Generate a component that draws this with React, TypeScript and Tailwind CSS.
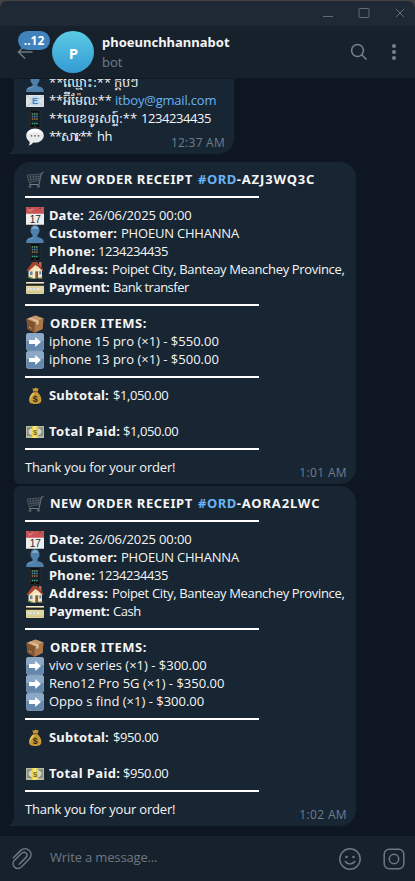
import React from "react";

type IconName =
  | "cart" | "calendar" | "user" | "phone" | "house" | "card" | "box"
  | "arrow" | "bag" | "cash" | "email" | "speech";

function Emoji({ name }: { name: IconName }) {
  return (
    <svg viewBox="0 0 18 18" className="ml-px h-[18px] w-[18px] shrink-0">
      {name === "cart" && (
        <g fill="none" stroke="#565d62" strokeWidth="1">
          <path d="M17.5 1.5 15.5 2 13 13.5H3.5" stroke="#777d82" />
          <path d="M1 4 15 3 13.5 9.5 3 11.5zM1.5 6.3 14.6 5.4M2.4 8.8 14 7.5M4 4 5.3 11M7 3.8 7.8 10.5M10 3.5V10M12.8 3.4 12 9.6" strokeWidth=".8" />
          <path d="M3.5 13.5 4.3 11.4" />
          <circle cx="4" cy="15.5" r="1.1" fill="#555b60" />
          <circle cx="12.5" cy="15.3" r="1.2" fill="#555b60" />
        </g>
      )}
      {name === "calendar" && (
        <g>
          <rect width="18" height="18" rx="1" fill="#eeeeec" />
          <path d="M0 1a1 1 0 0 1 1-1h16a1 1 0 0 1 1 1v5.8H0z" fill="#c65455" />
          <path d="M2.5 2.2h5M2.5 3.8h3" stroke="#e5a0a0" strokeWidth=".7" />
          <circle cx="4" cy="1.2" r=".8" fill="#6e2c30" />
          <circle cx="14" cy="1.2" r=".8" fill="#6e2c30" />
          <path d="M0 17.5h18" stroke="#b9b9b7" />
          <text x="9.2" y="16" textAnchor="middle" fontSize="10" fill="#24282b" className="font-['Liberation_Sans',sans-serif] tracking-normal">17</text>
        </g>
      )}
      {name === "user" && (
        <g>
          <path d="M.2 18c0-4.4 2.3-4.8 6.3-6V9.8C5 8.600 4.500 7.200 4.500 5.200 4.500 2 6.300.2 9 .2s4.500 1.800 4.500 5c0 2-.5 3.400-2 4.600V12c4 1.200 6.300 1.600 6.300 6z" fill="#4f7fab" />
          <path d="M6 4.500C6.300 2.300 7.300 1.300 9 1.300s2.700 1 3 3.200C11 3.500 7 3.500 6 4.500z" fill="#86abcb" />
          <path d="M2 15c1-1.500 4-1.600 5.500-2.600" stroke="#7ba2c5" fill="none" />
        </g>
      )}
      {name === "phone" && (
        <g>
          <rect x="4.300" y=".3" width="9.600" height="17.400" rx="1.200" fill="#0a0b0d" stroke="#3a3836" strokeWidth=".7" />
          <rect x="5.300" y="2.300" width="7.600" height="12.500" fill="#15222a" />
          <path d="M5.800 4h1.400m.8 0h1.400m.8 0h1.400" stroke="#6ea073" strokeWidth="1.300" />
          <path d="M5.800 6.500h1.400m.8 0h1.400m.8 0h1.400" stroke="#4d8fac" strokeWidth="1.300" />
          <path d="M5.800 9h1.400m.8 0h1.400m.8 0h1.400" stroke="#b07552" strokeWidth="1.300" />
          <path d="M5.800 13.500h1.400m.8 0h1.400m.8 0h1.400" stroke="#44a884" strokeWidth="1.300" />
          <circle cx="9.100" cy="16.200" r=".7" fill="#55504a" />
        </g>
      )}
      {name === "house" && (
        <g>
          <path d="M2.500 8.500 8 3l8 5v8.500l-9 1-4.500-1.500z" fill="#f3e1b5" />
          <path d="M7 17.500V8.500l9-1v9z" fill="#f8ebc9" />
          <path d="M13 1h2.500v5H13z" fill="#bd674d" />
          <path d="M.5 9.500 6.500 1.200 11 .8l6.700 8.400-1.400.8L10 3.400 2.300 10.600z" fill="#a84432" />
          <path d="M9.300 10.300h2.800v7H9.300z" fill="#8d573c" />
          <path d="M4 10.500h2.500v3.600H4zM13.300 10.200h2v3.400h-2z" fill="#5e8ea9" />
          <path d="M2 15.800 7 17.700M12.500 17.500l4-.5" stroke="#688b43" strokeWidth="1.400" />
        </g>
      )}
      {name === "card" && (
        <g>
          <rect y="3" width="18" height="12" rx="1" fill="#dfd5a0" />
          <path d="M0 4a1 1 0 0 1 1-1h16a1 1 0 0 1 1 1v.5H0z" fill="#f1ebcb" />
          <path d="M0 4.600h18v2.200H0z" fill="#20211d" />
          <path d="M2 9h11v2H2z" fill="#f5f2e5" />
          <path d="M3 10h1.500m1 0H8m1 0h2.500" stroke="#7f9cb3" strokeWidth=".8" />
          <path d="M1 13.200h16" stroke="#c5b978" strokeWidth=".8" />
        </g>
      )}
      {name === "box" && (
        <g>
          <path d="M.5 4 9.500.5l8 3-1 10.500L8.500 17.700 1.500 14z" fill="#94663e" />
          <path d="M.5 4 9.500.5l8 3L9 7.500z" fill="#c6996b" />
          <path d="M.5 4 9 7.500l-.5 10.200-7-3.700z" fill="#805430" />
          <path d="M9 7.500 17.500 3.500l-1 10.500-8 3.700z" fill="#a97649" />
          <path d="M4 2.700 12.700 5.800 12.600 9l-2.300 1 .1-3.100L2.600 3.300z" fill="#e1c39b" />
          <path d="M3 12 5.500 13.300" stroke="#d3ac7d" strokeWidth=".8" />
        </g>
      )}
      {name === "arrow" && (
        <g>
          <rect x=".2" y=".2" width="17.600" height="17.600" rx="2" fill="#6487ae" />
          <path d="M.2 8V2.200a2 2 0 0 1 2-2h13.600a2 2 0 0 1 2 2V8z" fill="#8ba8c7" />
          <rect x=".6" y=".6" width="16.800" height="16.800" rx="1.700" fill="none" stroke="#9eb5cc" strokeWidth=".5" />
          <path d="M3 6.900h6.200V4L15 9l-5.800 5v-2.900H3z" fill="#fff" />
        </g>
      )}
      {name === "bag" && (
        <g>
          <path d="M6.300 1.200 8 1.700 9.500.6l1.800 1 1.500-.3-1.500 3.800c2.600 2 4.100 5 4.100 8 0 3-2.400 4-6.200 4s-6.200-1-6.200-4c0-3 1.500-6 4.500-8z" fill="#c69a39" />
          <path d="M6 7c1-1 2-1.400 3-1.500C7 8 5 10 4.300 13c-.5-2.300.3-4.500 1.700-6z" fill="#ead06f" />
          <path d="M6.800 4.700h5" stroke="#825921" strokeWidth="1.200" />
          <text x="9.300" y="14.600" textAnchor="middle" fontSize="9" fontWeight="700" fill="#33291a" className="font-['Liberation_Sans',sans-serif] tracking-normal">$</text>
        </g>
      )}
      {name === "cash" && (
        <g>
          <rect y="3" width="18" height="12" fill="#b9b9a0" />
          <rect x="1" y="4.200" width="16" height="8.800" fill="#8b917c" />
          <ellipse cx="9" cy="8.700" rx="6.600" ry="4" fill="#d7d6c0" />
          <path d="M6 3h6v12H6z" fill="#ebd44f" />
          <path d="M7.500 3H10v12H7.500z" fill="#f5e98b" />
          <text x="9" y="11.500" textAnchor="middle" fontSize="7.500" fontWeight="700" fill="#78682a" className="font-['Liberation_Sans',sans-serif] tracking-normal">$</text>
        </g>
      )}
      {name === "email" && (
        <g>
          <rect y="3" width="18" height="12" fill="#dfe3e5" />
          <path d="M.5 14.500 7 9M17.500 14.500 11 9M.5 3.500 9 10l8.500-6.500" fill="none" stroke="#a9b1b7" strokeWidth=".7" />
          <rect x="5" y="4" width="8" height="9.500" rx="2" fill="#c2d8e9" />
          <text x="9" y="12" textAnchor="middle" fontSize="9" fontWeight="700" fill="#3685c9" className="font-['Liberation_Sans',sans-serif] tracking-normal">E</text>
        </g>
      )}
      {name === "speech" && (
        <g>
          <path d="M9 .5c5 0 8.800 3 8.800 7s-3.800 7.200-8.800 7.200c-.6 0-1.200 0-1.800-.1-1 1.500-2.500 2.600-4.700 3 .9-1.200 1.200-2.400 1.100-3.900C1.500 12.400.2 10.200.2 7.500c0-4 3.800-7 8.800-7z" fill="#e9eaeb" />
          <path d="M9 1.300c4 0 7 1.800 7.800 4.500-3-2-12-2-15.600 0C2 3.100 5 1.300 9 1.300z" fill="#fff" />
          <circle cx="5.500" cy="7.800" r=".9" fill="#666" />
          <circle cx="9" cy="7.800" r=".9" fill="#666" />
          <circle cx="12.500" cy="7.800" r=".9" fill="#666" />
        </g>
      )}
    </svg>
  );
}

const BOLD = "font-['Noto_Sans',sans-serif] font-bold";

function Row({ icon, children, className = "" }: { icon?: IconName; children?: React.ReactNode; className?: string }) {
  return (
    <div className="flex h-[18px] items-center whitespace-pre">
      {icon && <Emoji name={icon} />}
      <span className={`flex h-[18px] items-baseline pb-[2px] leading-[16px] ${icon ? "ml-[5px]" : ""} ${className}`}>{children}</span>
    </div>
  );
}

function Rule() {
  return (
    <div className="flex h-[18px] items-start pt-[7px]">
      <div className="h-[2px] w-[234px] bg-white" />
    </div>
  );
}

function Field({ icon, label, value, labelClass, valueClass }: {
  icon: IconName; label: string; value: string; labelClass: string; valueClass: string;
}) {
  return (
    <Row icon={icon}>
      <b className={`${BOLD} ${labelClass}`}>{label}</b>
      <span className={valueClass}>{value}</span>
    </Row>
  );
}

type Order = { id: string; payment: string; items: string[]; total: string; time: string; tail?: boolean };

function Receipt({ id, payment, items, total, time, tail }: Order) {
  return (
    <article
      className={`relative ml-[14px] w-[342px] bg-[#182533] pt-[9px] pb-[7px] pl-[11px] ${
        tail ? "rounded-t-[6px] rounded-tr-[16px] rounded-br-[16px]" : "rounded-[16px] rounded-bl-[6px]"
      }`}
    >
      <Row icon="cart" className={`pl-px ${BOLD}`}>
        <span className="w-[148px] tracking-[0.55px]">NEW ORDER RECEIPT</span>
        <span className="tracking-[0.5px] text-[#6ab3f3]">#ORD</span>
        <span className="tracking-[0.85px]">-{id}</span>
      </Row>
      <Rule />
      <Field icon="calendar" label="Date:" value="26/06/2025 00:00" labelClass="w-[39px] tracking-[0.1px]" valueClass="tracking-[-0.12px]" />
      <Field icon="user" label="Customer:" value="PHOEUN CHHANNA" labelClass="w-[72px] tracking-[0.1px]" valueClass="tracking-[-0.2px]" />
      <Field icon="phone" label="Phone:" value="1234234435" labelClass="w-[49px] tracking-[0.3px]" valueClass="tracking-[-0.43px]" />
      <Field icon="house" label="Address:" value="Poipet City, Banteay Meanchey Province," labelClass="w-[63px] tracking-[0.5px]" valueClass="tracking-[-0.33px]" />
      <Field icon="card" label="Payment:" value={payment} labelClass="w-[64px] tracking-[-0.1px]" valueClass="tracking-[-0.48px]" />
      <Rule />
      <Row icon="box" className={`pl-px tracking-[0.55px] ${BOLD}`}>ORDER ITEMS:</Row>
      {items.map((item) => (
        <Row key={item} icon="arrow">{item}</Row>
      ))}
      <Rule />
      <Field icon="bag" label="Subtotal:" value={total} labelClass="w-[64px] tracking-[0.15px]" valueClass="tracking-[-0.4px]" />
      <Row />
      <Field icon="cash" label="Total Paid:" value={total} labelClass="w-[74px] tracking-[0.4px]" valueClass="tracking-[-0.4px]" />
      <Rule />
      <Row className="tracking-[-0.2px]">Thank you for your order!</Row>
      <time className="absolute right-[9px] bottom-[3px] text-[12px] leading-[16px] tracking-[0.35px] text-[#6d7f8f]">{time}</time>
      {tail && <Tail />}
    </article>
  );
}

function Tail() {
  return (
    <svg viewBox="0 0 6 12" className="absolute bottom-0 -left-[6px] h-3 w-1.5">
      <path d="M6 0v12H0C4 10 6 6 6 0z" fill="#182533" />
    </svg>
  );
}

export default function App() {
  return (
    <div className="flex h-[881px] w-[415px] flex-col overflow-hidden bg-[#0e1621] font-['Open_Sans','Noto_Sans',sans-serif] text-[13px] leading-[18px] text-[#f5f5f5]">
      <div className="h-[26px] shrink-0 bg-[#444342] pt-px">
        <div className="flex h-full justify-end rounded-t-[7px] bg-[#1f2936]">
          <svg viewBox="0 0 95 25" className="h-[25px] w-[95px]" fill="none" stroke="#606d79" strokeWidth="1">
            <path d="M3 15.500h10" />
            <rect x="39" y="7.500" width="10" height="9" rx="1" />
            <path d="m76 8 8 8m0-8-8 8" />
          </svg>
        </div>
      </div>
      <header className="relative flex h-[53px] shrink-0 items-start border-b border-[#101923] bg-[#17212b]">
        <svg viewBox="0 0 16 14" className="mt-[19px] ml-[17px] h-[14px] w-4" fill="none" stroke="#6c7883" strokeWidth="1.500">
          <path d="M15.500 7H1.500M8 .5 1.500 7 8 13.500" />
        </svg>
        <div className="ml-[19px] mt-[5px] flex h-[42px] w-[42px] items-center justify-center rounded-full bg-linear-to-b from-[#5bcbe3] to-[#359ad4] pt-[2px] pl-px text-[15px] font-bold text-white">
          P
        </div>
        <div className="ml-[8px] mt-[7px]">
          <div className={`text-[13px] leading-[18px] text-[#f5f5f5] ${BOLD}`}>phoeunchhannabot</div>
          <div className="mt-[2px] text-[13px] leading-[18px] text-[#6d7f8f]">bot</div>
        </div>
        <div className="absolute top-[5px] left-[18px] flex h-[19px] w-8 items-center justify-center rounded-full bg-[#4082bc] text-[12px] font-bold text-white">
          ..12
        </div>
        <svg viewBox="0 0 18 18" className="mt-[17px] ml-auto h-[18px] w-[18px]" fill="none" stroke="#76818b" strokeWidth="1.500">
          <circle cx="7.500" cy="7.500" r="5.900" />
          <path d="m11.500 11.500 5 5" />
        </svg>
        <svg viewBox="0 0 6 18" className="mt-[17px] mr-[18px] ml-[23px] h-[18px] w-[6px]" fill="#76818b">
          <circle cx="3" cy="3" r="2" />
          <circle cx="3" cy="9" r="2" />
          <circle cx="3" cy="15" r="2" />
        </svg>
      </header>
      <main className="flex h-[757px] shrink-0 flex-col overflow-hidden">
        <div className="flex h-[75px] shrink-0 flex-col justify-end overflow-hidden pl-2">
          <article className="relative ml-[6px] w-[220px] rounded-br-[16px] bg-[#182533] pb-[8px] pl-[11px]">
            <Row icon="user">**ឈ្មោះ:** ក្តប់ៗ</Row>
            <Row icon="email"><span className="w-[66px] tracking-[-0.15px]">**អ៊ីម៉ែល:**</span><span className="tracking-[-0.2px] text-[#6ab3f3]">itboy@gmail.com</span></Row>
            <Row icon="phone"><span className="w-[92px]">**លេខទូរសព្ទ៍:**</span><span className="tracking-[-0.43px]">1234234435</span></Row>
            <Row icon="speech"><span className="w-[48px] tracking-[-1.4px]">**សារ:**</span><span className="tracking-[-0.4px]">hh</span></Row>
            <time className="absolute right-[9px] bottom-[3px] text-[12px] leading-[16px] tracking-[0.25px] text-[#6d7f8f]">12:37 AM</time>
            <Tail />
          </article>
        </div>
        <div className="mt-[8px] flex flex-col gap-[2px]">
          <Receipt
            id="AZJ3WQ3C"
            payment="Bank transfer"
            items={["iphone 15 pro (×1) - $550.00", "iphone 13 pro (×1) - $500.00"]}
            total="$1,050.00"
            time="1:01 AM"
          />
          <Receipt
            id="AORA2LWC"
            payment="Cash"
            items={["vivo v series (×1) - $300.00", "Reno12 Pro 5G (×1) - $350.00", "Oppo s find (×1) - $300.00"]}
            total="$950.00"
            time="1:02 AM"
            tail
          />
        </div>
      </main>
      <footer className="flex h-[45px] shrink-0 items-center bg-[#17212b]">
        <svg viewBox="0 0 24 24" className="ml-[10px] h-6 w-6" fill="none" stroke="#6c7883" strokeWidth="1.500" strokeLinecap="round">
          <path d="M3.300 10.800 10.500 3.600c5.500-5.300 14.300 1.600 8.800 8.200l-7.600 8c-5.700 4.800-11-2.200-7.400-6.300l7-7c3.800-3.300 7.400.7 4.700 3.900l-6.800 6.900" />
        </svg>
        <div className="ml-[16px] pb-[3px] text-[13px] tracking-[-0.15px] text-[#6d7883]">Write a message...</div>
        <svg viewBox="0 0 24 24" className="ml-auto h-6 w-6" fill="none" stroke="#6c7883" strokeWidth="1.500">
          <circle cx="12" cy="12" r="10.200" />
          <circle cx="8.500" cy="10" r="1.300" fill="#6c7883" stroke="none" />
          <circle cx="15.500" cy="10" r="1.300" fill="#6c7883" stroke="none" />
          <path d="M7.300 14.500c2 3.200 7.400 3.200 9.400 0" strokeLinecap="round" />
        </svg>
        <svg viewBox="0 0 22 22" className="mr-[10px] ml-[21px] h-[22px] w-[22px]" fill="none" stroke="#6c7883" strokeWidth="1.500">
          <rect x="1.200" y="1.200" width="19.600" height="19.600" rx="5" />
          <circle cx="11" cy="11" r="4.700" />
        </svg>
      </footer>
    </div>
  );
}
